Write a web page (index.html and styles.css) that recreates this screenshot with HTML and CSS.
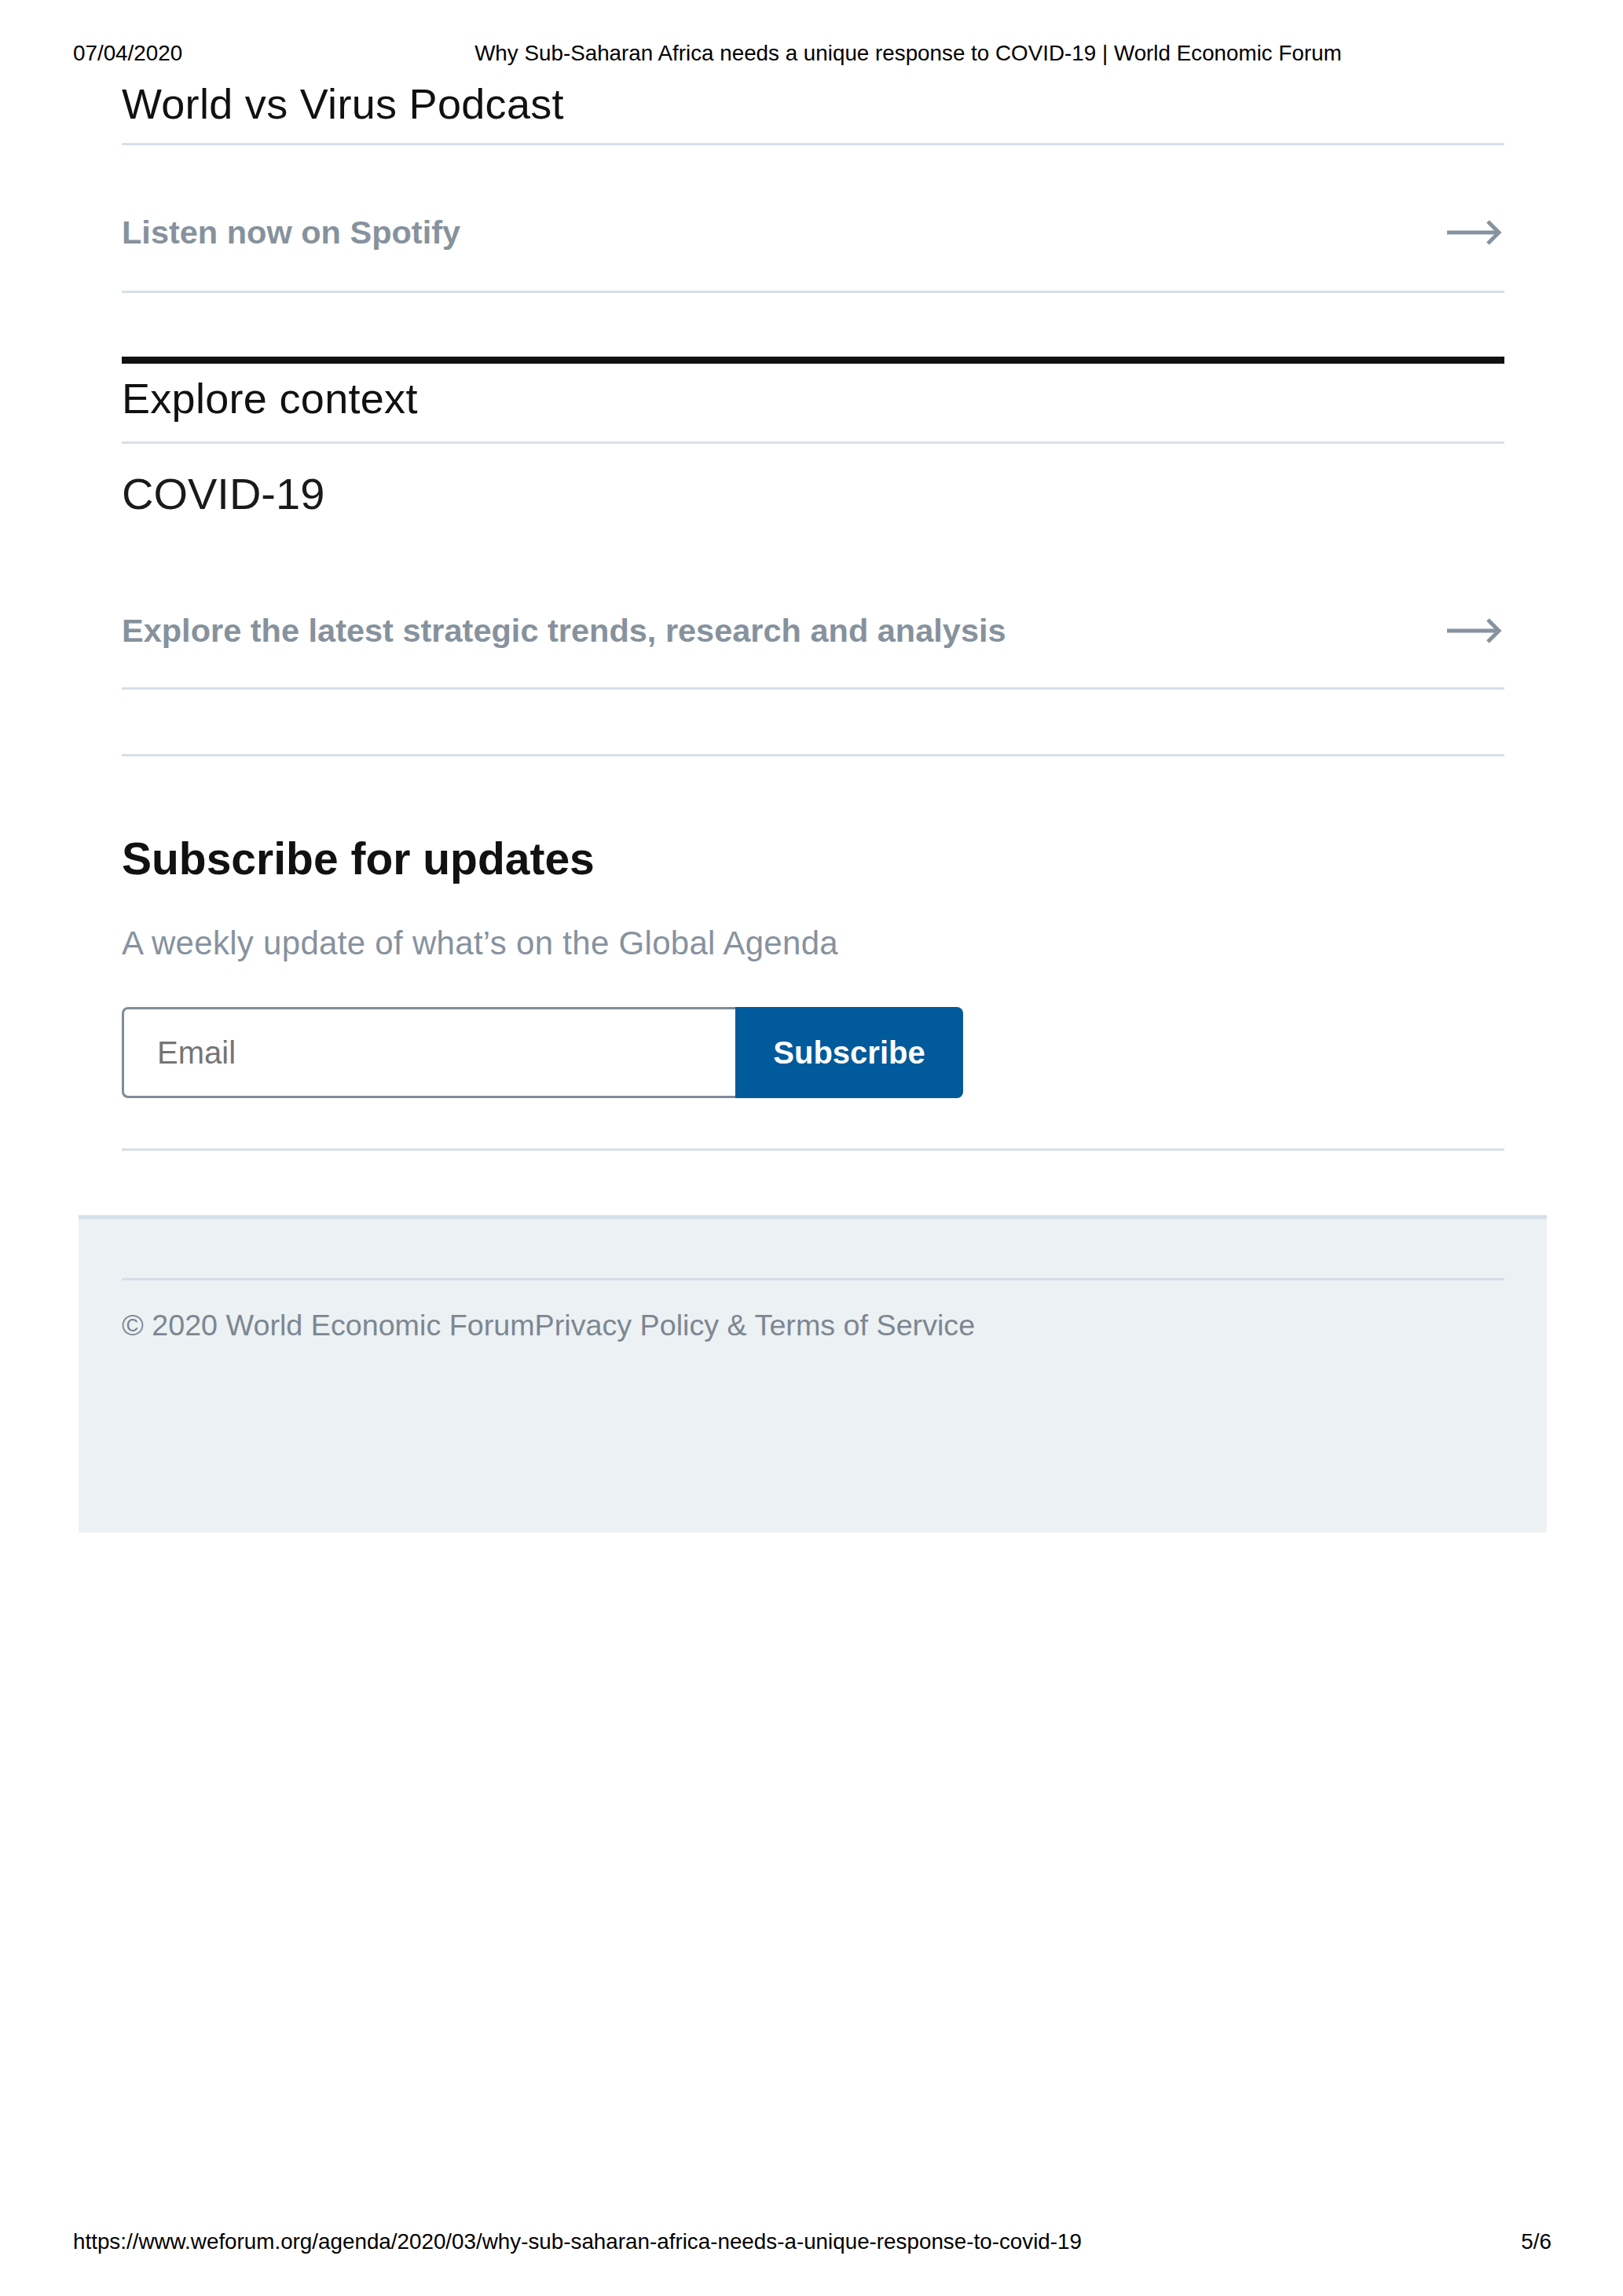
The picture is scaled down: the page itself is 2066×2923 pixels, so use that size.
FILE: index.html
```html
<!DOCTYPE html>
<html lang="en">
<head>
    <meta charset="UTF-8">
    <meta name="viewport" content="width=device-width, initial-scale=1.0">
    <title>Why Sub-Saharan Africa needs a unique response to COVID-19 | World Economic Forum</title>
    <link rel="stylesheet" href="styles.css">
</head>
<body>

    <!-- Print header -->
    <div class="print-head">
        <span class="print-date">07/04/2020</span>
        <span class="print-title">Why Sub-Saharan Africa needs a unique response to COVID-19 | World Economic Forum</span>
    </div>

    <main class="page">
        <!-- Podcast block -->
        <section class="podcast">
            <h2 class="block-title">World vs Virus Podcast</h2>
            <a class="link-row" href="#">
                <span>Listen now on Spotify</span>
                <svg class="arrow" width="70" height="34" viewBox="0 0 70 34" aria-hidden="true">
                    <path d="M0 17H66" />
                    <path d="M52 3L66 17L52 31" />
                </svg>
            </a>
        </section>

        <!-- Explore context -->
        <section class="context">
            <h2 class="block-title context-title">Explore context</h2>
            <h3 class="topic">COVID-19</h3>
            <a class="link-row link-row-tall" href="#">
                <span>Explore the latest strategic trends, research and analysis</span>
                <svg class="arrow" width="70" height="34" viewBox="0 0 70 34" aria-hidden="true">
                    <path d="M0 17H66" />
                    <path d="M52 3L66 17L52 31" />
                </svg>
            </a>
        </section>

        <hr class="divider">

        <!-- Newsletter -->
        <section class="subscribe">
            <h2 class="subscribe-title">Subscribe for updates</h2>
            <p class="subscribe-text">A weekly update of what’s on the Global Agenda</p>
            <form class="subscribe-form">
                <input type="email" class="email-input" placeholder="Email">
                <button type="button" class="subscribe-btn">Subscribe</button>
            </form>
        </section>
    </main>

    <!-- Site footer -->
    <footer class="site-footer">
        <div class="footer-inner">
            <p class="footer-text">© 2020 World Economic Forum<a href="#">Privacy Policy &amp; Terms of Service</a></p>
        </div>
    </footer>

    <!-- Print footer -->
    <div class="print-foot">
        <span>https://www.weforum.org/agenda/2020/03/why-sub-saharan-africa-needs-a-unique-response-to-covid-19</span>
        <span>5/6</span>
    </div>

</body>
</html>
```

FILE: styles.css
```css
/* General styles */
body {
    font-family: 'Liberation Sans', Arial, Helvetica, sans-serif;
    margin: 0;
    padding: 0;
    background-color: #fff;
    color: #111;
    min-height: 100vh;
    display: flex;
    flex-direction: column;
}

a {
    text-decoration: none;
}

/* Print header / footer */
.print-head,
.print-foot {
    font-size: 27.8px;
    line-height: 32px;
    color: #000;
    display: flex;
}

.print-head {
    padding: 52px 0 0 93px;
}

.print-title {
    margin-left: 372px;
}

.print-foot {
    margin-top: auto;
    justify-content: space-between;
    padding: 0 91px 53px 93px;
}

/* Page column */
.page {
    width: 1760px;
    margin-left: 155px;
}

.block-title {
    font-size: 54px;
    letter-spacing: 0.3px;
    line-height: 64px;
    font-weight: normal;
    margin: 0;
    padding-bottom: 18px;
    border-bottom: 3px solid #d6e0e9;
}

.podcast {
    margin-top: 16px;
}

/* Link rows with arrow */
.link-row {
    display: flex;
    justify-content: space-between;
    align-items: center;
    padding: 87px 0 50px;
    font-size: 41.5px;
    line-height: 48px;
    font-weight: bold;
    color: #86929d;
    border-bottom: 3px solid #d6e0e9;
}

.link-row-tall {
    padding: 117px 0 48px;
}

.arrow {
    margin-right: 3px;
    fill: none;
    stroke: #86929d;
    stroke-width: 5;
}

/* Explore context */
.context {
    margin-top: 81px;
    border-top: 9px solid #111;
}

.context-title {
    padding: 12px 0 23px;
}

.topic {
    font-size: 56px;
    line-height: 67px;
    font-weight: normal;
    color: #1a1a1a;
    margin: 30px 0 0;
}

.divider {
    margin: 82px 0 0;
    border: none;
    height: 3px;
    background-color: #d6e0e9;
}

/* Subscribe */
.subscribe {
    padding-bottom: 64px;
    border-bottom: 3px solid #d6e0e9;
}

.subscribe-title {
    font-size: 57px;
    line-height: 67px;
    font-weight: bold;
    margin: 97px 0 0;
}

.subscribe-text {
    font-size: 42px;
    letter-spacing: 0.3px;
    line-height: 48px;
    color: #87929f;
    margin: 50px 0 0;
}

.subscribe-form {
    display: flex;
    margin-top: 57px;
    height: 116px;
}

.email-input {
    box-sizing: border-box;
    width: 781px;
    height: 116px;
    border: 3px solid #808c98;
    border-right: none;
    border-radius: 8px 0 0 8px;
    padding: 0 0 0 42px;
    font-family: inherit;
    font-size: 40px;
    color: #333;
    outline: none;
}

.email-input::placeholder {
    color: #757575;
}

.subscribe-btn {
    width: 290px;
    height: 116px;
    border: none;
    border-radius: 0 8px 8px 0;
    background-color: #005a9b;
    color: #fff;
    font-family: inherit;
    font-size: 40px;
    font-weight: bold;
    cursor: pointer;
}

/* Site footer */
.site-footer {
    width: 1869px;
    margin: 82px 0 0 100px;
    background-color: #ecf1f4;
    border-top: 5px solid #d5dfe8;
    padding: 75px 54px 242px 55px;
    box-sizing: border-box;
}

.footer-inner {
    border-top: 3px solid #d5dfe8;
}

.footer-text {
    font-size: 37.7px;
    line-height: 44px;
    color: #7d8791;
    margin: 35px 0 0;
}

.footer-text a {
    color: #7d8791;
}
```
